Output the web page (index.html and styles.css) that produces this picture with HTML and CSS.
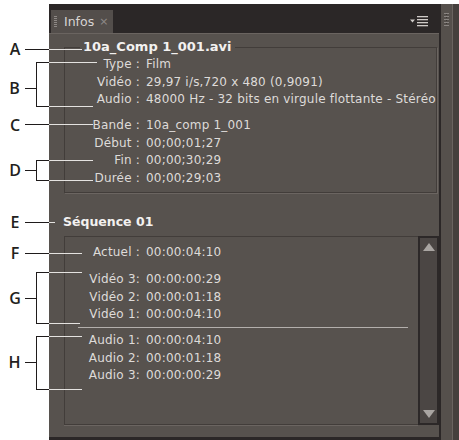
FILE: index.html
```
<!DOCTYPE html>
<html lang="fr">
<head>
<meta charset="utf-8">
<title>Infos</title>
<link rel="stylesheet" href="styles.css">
</head>
<body>
<div class="page">
  <div class="panel">
    <div class="main">
      <div class="tabbar">
        <div class="tab">
          <svg class="grip" width="3" height="11" viewBox="0 0 3 11"><g fill="#8d8885"><rect x="0" y="0" width="3" height="1"/><rect x="0" y="2" width="3" height="1"/><rect x="0" y="4" width="3" height="1"/><rect x="0" y="6" width="3" height="1"/><rect x="0" y="8" width="3" height="1"/><rect x="0" y="10" width="3" height="1"/></g></svg>
          <span class="tab-label">Infos</span>
          <span class="close">×</span>
        </div>
        <svg class="menu" width="19" height="11" viewBox="0 0 19 11"><path d="M0 3.5h5l-2.5 3z" fill="#cfcbc8"/><g fill="#cfcbc8"><rect x="7" y="0" width="11" height="1.3"/><rect x="7" y="3" width="11" height="1.3"/><rect x="7" y="6" width="11" height="1.3"/><rect x="7" y="9" width="11" height="1.3"/></g></svg>
      </div>
      <div class="content">
        <div class="box file">
          <div class="legend">10a_Comp 1_001.avi</div>
          <div class="rows">
            <div class="row"><span class="k">Type :</span><span class="v">Film</span></div>
            <div class="row"><span class="k">Vidéo :</span><span class="v">29,97 i/s,720 x 480 (0,9091)</span></div>
            <div class="row"><span class="k">Audio :</span><span class="v">48000 Hz - 32 bits en virgule flottante - Stéréo</span></div>
            <div class="row gap"><span class="k">Bande :</span><span class="v">10a_comp 1_001</span></div>
            <div class="row"><span class="k">Début :</span><span class="v">00;00;01;27</span></div>
            <div class="row"><span class="k">Fin :</span><span class="v">00;00;30;29</span></div>
            <div class="row"><span class="k">Durée :</span><span class="v">00;00;29;03</span></div>
          </div>
        </div>
        <h2 class="seq-title">Séquence 01</h2>
        <div class="seq">
          <div class="list">
            <div class="row"><span class="k">Actuel :</span><span class="v">00:00:04:10</span></div>
            <div class="row gap2"><span class="k">Vidéo 3:</span><span class="v">00:00:00:29</span></div>
            <div class="row"><span class="k">Vidéo 2:</span><span class="v">00:00:01:18</span></div>
            <div class="row"><span class="k">Vidéo 1:</span><span class="v">00:00:04:10</span></div>
            <div class="sep"></div>
            <div class="row"><span class="k">Audio 1:</span><span class="v">00:00:04:10</span></div>
            <div class="row"><span class="k">Audio 2:</span><span class="v">00:00:01:18</span></div>
            <div class="row"><span class="k">Audio 3:</span><span class="v">00:00:00:29</span></div>
          </div>
          <div class="scroll">
            <svg width="12" height="8" viewBox="0 0 12 8"><path d="M6 0L12 8H0z" fill="#a9a5a2"/></svg>
            <svg width="12" height="8" viewBox="0 0 12 8"><path d="M0 0H12L6 8z" fill="#a9a5a2"/></svg>
          </div>
        </div>
      </div>
    </div>
    <div class="side">
      <svg class="side-grip" width="5" height="14" viewBox="0 0 5 14"><g fill="#8a8582"><rect x="0" y="0" width="5" height="1"/><rect x="0" y="3" width="5" height="1"/><rect x="0" y="6" width="5" height="1"/><rect x="0" y="9" width="5" height="1"/><rect x="0" y="12" width="5" height="1"/></g><g fill="#3a3634"><rect x="2" y="1" width="1" height="1"/><rect x="2" y="4" width="1" height="1"/><rect x="2" y="7" width="1" height="1"/><rect x="2" y="10" width="1" height="1"/></g></svg>
    </div>
  </div>
  <svg class="callouts" width="459" height="440" viewBox="0 0 459 440">
    <g stroke="#1f1b1b" stroke-width="1" fill="none">
      <path d="M25 49.5H49"/>
      <path d="M25 88.5H36.5M36.5 62V107M36 62.5H49M36 106.5H49"/>
      <path d="M25 124.5H49"/>
      <path d="M25 170.5H36.5M36.5 160V181M36 160.5H49M36 180.5H49"/>
      <path d="M25 222.5H49"/>
      <path d="M25 253.5H49"/>
      <path d="M25 298.5H36.5M36.5 272V324M36 272.5H49M36 323.5H49"/>
      <path d="M25 362.5H36.5M36.5 336V390M36 336.5H49M36 389.5H49"/>
    </g>
    <g stroke="#e4e2e0" stroke-width="1" fill="none">
      <path d="M49 49.5H82"/>
      <path d="M49 62.5H97M49 106.5H93"/>
      <path d="M49 124.5H93"/>
      <path d="M49 160.5H93M49 180.5H93"/>
      <path d="M49 222.5H55"/>
      <path d="M49 253.5H82"/>
      <path d="M49 272.5H82M49 323.5H80"/>
      <path d="M49 336.5H82M49 389.5H82"/>
    </g>
    <g class="marks" text-anchor="middle">
      <text x="15" y="55">A</text>
      <text x="14.5" y="94">B</text>
      <text x="15" y="131">C</text>
      <text x="15" y="176">D</text>
      <text x="15" y="228">E</text>
      <text x="15" y="259">F</text>
      <text x="15" y="304">G</text>
      <text x="14.5" y="368">H</text>
    </g>
  </svg>
</div>
</body>
</html>
```

FILE: styles.css
```
* { box-sizing: border-box; }
html, body { margin: 0; padding: 0; background: #ffffff; }
body {
  width: 459px;
  height: 440px;
  overflow: hidden;
  font-family: "DejaVu Sans", "Liberation Sans", sans-serif;
}
.page {
  position: relative;
  width: 459px;
  height: 440px;
  padding: 4px 0 0 49px;
}
.panel {
  display: flex;
  height: 436px;
  background: #2b2727;
}
.main {
  width: 390px;
  display: flex;
  flex-direction: column;
}
.tabbar {
  height: 29px;
  display: flex;
  align-items: flex-end;
  padding-left: 2px;
}
.tab {
  width: 62px;
  height: 23px;
  background: #534e4b;
  display: flex;
  align-items: center;
  padding-left: 3px;
  color: #d8d5d3;
  font-size: 12.5px;
}
.grip { margin-right: 7px; }
.tab-label { line-height: 16px; }
.close {
  margin-left: 5px;
  font-size: 11px;
  color: #8e8a88;
}
.menu {
  margin-left: auto;
  margin-right: 10px;
  align-self: center;
  margin-top: 5px;
}
.content {
  flex: 1;
  background: #57524e;
  border-top: 1px solid #6a6460;
  padding: 13px 2px 0 15px;
  margin-bottom: 3px;
  color: #dedbd9;
  font-size: 12px;
  letter-spacing: 0.2px;
}
.box {
  border: 1px solid #423d3a;
  box-shadow: 1px 1px 0 #6b6561;
}
.legend {
  display: table;
  margin: -9px 0 0 15px;
  padding: 0 3px;
  background: #57524e;
  font-weight: bold;
  font-size: 13px;
  line-height: 16px;
  letter-spacing: 0;
  color: #f3f1f0;
}
.rows { padding: 1px 0 5px; }
.row {
  display: flex;
  line-height: 17.5px;
  white-space: nowrap;
}
.k {
  width: 75px;
  text-align: right;
  flex: none;
}
.v { margin-left: 6px; }
.gap { margin-top: 8.5px; }
.seq-title {
  margin: 21px 0 6px -1px;
  font-size: 12.5px;
  line-height: 16px;
  font-weight: bold;
  letter-spacing: 0;
  color: #f3f1f0;
}
.seq {
  display: flex;
  height: 189px;
  margin-right: -2px;
}
.list {
  flex: 1;
  border: 1px solid #423d3a;
  border-right: none;
  box-shadow: 0 1px 0 #6b6561;
  padding-top: 7px;
}
.gap2 { margin-top: 9.75px; }
.sep {
  height: 1px;
  margin: 3px 10px 4.25px 13px;
  background: #b3afac;
}
.scroll {
  width: 21px;
  background: #4b4644;
  border: 2px solid #2c2828;
  display: flex;
  flex-direction: column;
  justify-content: space-between;
  align-items: center;
  padding: 5px 0 5px;
}
.side {
  margin-left: 2px;
  flex: 1;
  background: linear-gradient(to right, #55504c 0 11px, #6a6460 11px 12px, #45403d 12px);
  padding: 9px 0 0 3px;
}
.side-grip { display: block; }
.callouts {
  position: absolute;
  left: 0;
  top: 0;
  pointer-events: none;
}
.marks {
  font-family: "Open Sans", "Liberation Sans", sans-serif;
  font-weight: 600;
  font-size: 16px;
  fill: #231f20;
}
```
